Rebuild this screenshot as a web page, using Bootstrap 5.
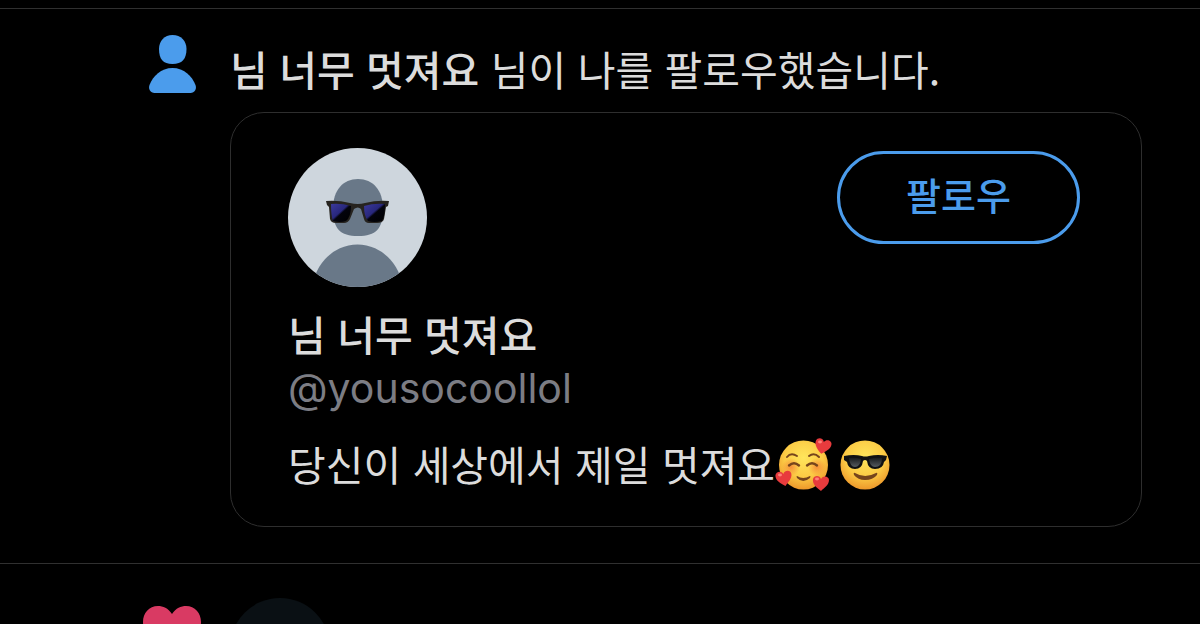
<!DOCTYPE html>
<html lang="ko" data-bs-theme="dark">
<head>
<meta charset="utf-8">
<meta name="viewport" content="width=device-width, initial-scale=1">
<title>알림</title>
<link href="https://cdn.jsdelivr.net/npm/bootstrap@5.3.0/dist/css/bootstrap.min.css" rel="stylesheet">
<style>
  body { background: #000; color: #dcdcdc; font-family: "Noto Sans CJK KR", sans-serif; font-size: 41px; line-height: 52px; }
  .notice { border-top: 1px solid #303030; }
  .notice + .notice { margin-top: 36px; }
  .notice-icon { width: 230px; padding-right: 28px; }
  .notice-main { padding-right: 58px; }
  .headline { padding-top: 33px; }
  .profile { border: 1px solid #2e2e2e; border-radius: 34px; padding: 35px 61px 36px 57px; margin-top: 18px; }
  .name { color: #dcdcdc; font-weight: 500; text-decoration: none; }
  .btn-follow { --bs-btn-color: #4b9cec; --bs-btn-border-color: #4b9cec; --bs-btn-hover-color: #000; --bs-btn-hover-bg: #4b9cec; --bs-btn-border-width: 3px; width: 243px; height: 93px; padding: 0 0 8px; font-size: 38px; font-weight: 500; line-height: 48px; margin-top: 3px; }
  .display-name { margin-top: 20px; }
  .handle { color: #7c7d84; font-family: Inter, sans-serif; margin-top: 3px; }
  .bio { margin-top: 22px; }
  .emoji { width: 54px; height: 54px; overflow: visible; }
  .liker { width: 100px; height: 100px; background: #0a1014; margin-top: 34px; }
</style>
</head>
<body>
<main class="vh-100 overflow-hidden pt-2">
  <article class="notice d-flex">
    <div class="notice-icon d-flex justify-content-end align-items-start flex-shrink-0 pt-4">
      <svg width="60" height="60" viewBox="0 0 60 60" fill="#4b9cec" aria-hidden="true">
        <path d="M30.500 2C39 2 44.500 8 44.500 16C44.500 26 40 31 30.500 31S17 26 17 16C17 8 22.500 2 30.500 2Z"/>
        <path d="M30.500 35C42 35 50 43 53.500 52C55 56 52.500 60 48.500 60H12.500C8.500 60 6 56 7.500 52C11 43 19 35 30.500 35Z"/>
      </svg>
    </div>
    <div class="notice-main flex-grow-1">
      <p class="headline mb-0"><a class="name" href="#">님 너무 멋져요</a> 님이 나를 팔로우했습니다.</p>
      <section class="profile">
        <div class="d-flex justify-content-between align-items-start">
          <svg width="139" height="139" viewBox="0 0 139 139" role="img" aria-label="프로필 사진">
            <defs>
              <clipPath id="round"><circle cx="69.500" cy="69.500" r="69.500"/></clipPath>
              <linearGradient id="lens" x1="0" y1="0" x2="1" y2="1"><stop offset="0" stop-color="#3c3a9c"/><stop offset=".45" stop-color="#28277c"/><stop offset=".53" stop-color="#03030c"/><stop offset="1" stop-color="#000"/></linearGradient>
            </defs>
            <g clip-path="url(#round)">
              <path fill="#ced6dd" d="M0 0h139v139H0z"/>
              <path fill="#697888" d="M70 31C85 31 95 42 95 61C95 81 88 88 70 88S45 81 45 61C45 42 55 31 70 31Z"/>
              <ellipse cx="69.500" cy="147" rx="46" ry="50.500" fill="#697888"/>
            </g>
            <path fill="#26231f" d="M38 53Q50 52 62 55Q70 57 77 55Q89 52 101 53L100 58L98 59L96 71Q95 75 89 75H81Q77 75 76 71L73 61Q70 58 66 61L62 71Q60 75 56 75H48Q43 75 42 71L41 59L39 57Z"/>
            <path fill="url(#lens)" d="M43 56Q53 55 63 58Q63 69 58 73Q52 75 45 73Q43 68 43 56Z"/>
            <path fill="url(#lens)" d="M76 58Q86 55 97 56Q97 69 94 73Q86 75 80 73Q76 68 76 58Z"/>
          </svg>
          <button type="button" class="btn btn-follow rounded-pill">팔로우</button>
        </div>
        <div class="display-name"><a class="name" href="#">님 너무 멋져요</a></div>
        <div class="handle">@yousocoollol</div>
        <div class="bio d-flex align-items-center">
          <span class="me-1">당신이 세상에서 제일 멋져요</span>
          <svg class="emoji" viewBox="0 0 54 54" role="img" aria-label="하트에 둘러싸여 웃는 얼굴">
            <defs>
              <radialGradient id="face" cx=".5" cy=".35" r=".65"><stop offset="0" stop-color="#ffe65c"/><stop offset=".6" stop-color="#fccb45"/><stop offset="1" stop-color="#ed982b"/></radialGradient>
              <radialGradient id="blush"><stop offset="0" stop-color="#f47b35" stop-opacity=".75"/><stop offset="1" stop-color="#f47b35" stop-opacity="0"/></radialGradient>
              <path id="heart" d="M0 8C-4 5-9 1-8-4C-7-8-1-8 0-4C2-8 8-7 8-3C8 2 3 5 0 8Z"/>
            </defs>
            <circle cx="24.500" cy="29" r="24.500" fill="url(#face)"/>
            <circle cx="12" cy="31" r="9" fill="url(#blush)"/><circle cx="38" cy="31" r="9" fill="url(#blush)"/>
            <g fill="none" stroke="#76451c" stroke-width="2" stroke-linecap="round">
              <path d="M8 21Q12 16 18 20M30 20Q35 16 40 21"/>
              <path stroke-width="2.400" d="M10 29.500Q15 25 20 29.500M28 29.500Q33 25 38 29.500"/>
            </g>
            <path fill="#76451c" d="M18 40Q24 44 31 40Q32 40 31 42Q24 48 18 42Q17 40 18 40Z"/>
            <g fill="#e83b3d">
              <use href="#heart" transform="translate(44 10) rotate(12)"/>
              <use href="#heart" transform="translate(5 42) rotate(-10)"/>
              <use href="#heart" transform="translate(42 47)"/>
            </g>
            <g fill="#ff8078"><ellipse cx="41" cy="6" rx="2" ry="1.400"/><ellipse cx="1" cy="39" rx="2" ry="1.400"/><ellipse cx="38" cy="43" rx="2" ry="1.400"/></g>
          </svg>
          <svg class="emoji ms-2" viewBox="0 0 54 54" role="img" aria-label="선글라스를 쓰고 웃는 얼굴">
            <defs><linearGradient id="shade" x1="0" y1="0" x2="0" y2="1"><stop offset="0" stop-color="#171a1c"/><stop offset="1" stop-color="#555b60"/></linearGradient></defs>
            <circle cx="24" cy="29" r="24.500" fill="url(#face)"/>
            <path fill="#101112" d="M3 20Q13 18 21 20Q24 21 28 20Q37 18 46 20L45 24L43 26Q42 33 34 33Q27 33 26 25Q24 23 22 25Q21 33 14 33Q7 33 6 26L3 24Z"/>
            <path fill="url(#shade)" d="M8 22Q14 21 20 23Q19 31 14 31Q9 31 8 22ZM28 23Q35 21 41 22Q41 31 34 31Q29 31 28 23Z"/>
            <path fill="#76451c" d="M14 37Q24 43 35 37Q37 36 36 39Q32 44 24 44Q17 44 13 39Q12 36 14 37Z"/>
          </svg>
        </div>
      </section>
    </div>
  </article>
  <article class="notice d-flex">
    <div class="notice-icon d-flex justify-content-end align-items-start flex-shrink-0 pt-4">
      <svg width="60" height="90" viewBox="0 0 60 90" fill="#d93a63" aria-hidden="true">
        <path d="M30 26C26 20 21 18 16 18C7 18 1 25 1 34C1 50 19 65 30 72C41 65 59 50 59 34C59 25 53 18 44 18C39 18 34 20 30 26Z"/>
      </svg>
    </div>
    <div class="notice-main flex-grow-1"><div class="liker rounded-circle"></div></div>
  </article>
</main>
<script src="https://cdn.jsdelivr.net/npm/bootstrap@5.3.0/dist/js/bootstrap.bundle.min.js"></script>
</body>
</html>
